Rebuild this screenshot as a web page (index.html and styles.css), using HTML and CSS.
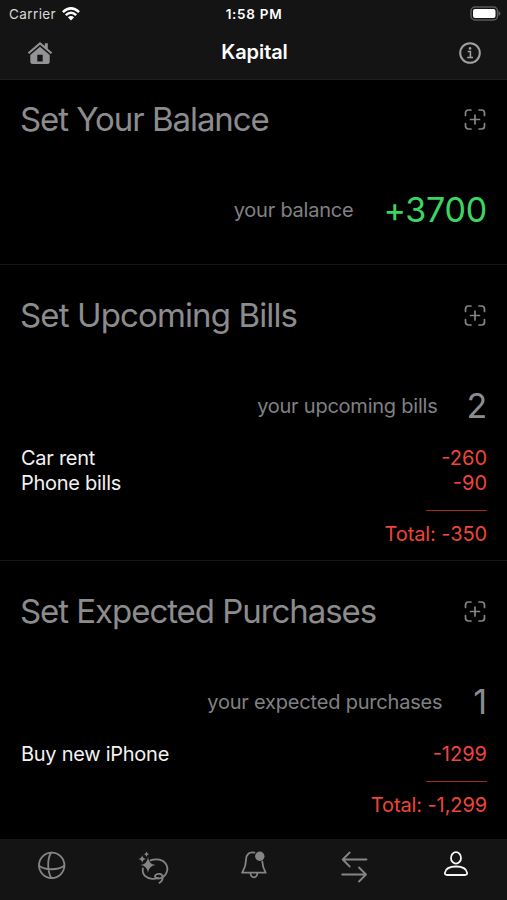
FILE: index.html
```html
<!DOCTYPE html>
<html lang="en">
<head>
<meta charset="utf-8">
<title>Kapital</title>
<link rel="stylesheet" href="styles.css">
</head>
<body>
<div class="app">
  <header class="header">
    <div class="status">
      <div class="carrier"><span>Carrier</span>
        <svg class="wifi" width="18" height="14" viewBox="0 0 18 14" fill="none" stroke="#fff" stroke-width="2.5"><path d="M.9 5.2Q9-2.4 17.100 5.200M3.800 8.200Q9 3.400 14.200 8.200"/><path d="M5.900 10.200Q9 7.700 12.100 10.200L9 13.400Z" fill="#fff" stroke="none"/></svg>
      </div>
      <span class="time">1:58 PM</span>
      <div class="battery-wrap"><svg width="31" height="16" viewBox="0 0 31 16"><rect x="1" y="1" width="26.500" height="13" rx="4" fill="#141414" stroke="#5a5a5a" stroke-width="1.500"/><rect x="3" y="3" width="22.500" height="9" rx="2" fill="#fff"/><path d="M28.500 5q2 .6 2 2.500t-2 2.500z" fill="#5a5a5a"/></svg></div>
    </div>
    <div class="navbar">
      <svg width="26" height="24" viewBox="0 0 26 24" fill="#939396"><path d="M.8 11.500 13 .9l4.800 4.200V2.200h3v5.500l4.400 3.800-1.400 1.500L13 3.700 2.200 13z"/><path fill-rule="evenodd" d="M13 5.700l9.700 8.300v6.500q0 2.500-2.500 2.500H5.800q-2.500 0-2.500-2.500V14zm-2.700 8v6.800h5.400v-6.800z"/></svg>
      <h1 class="title">Kapital</h1>
      <svg width="24" height="24" viewBox="0 0 24 24" fill="none" stroke="#a0a0a3" stroke-width="2"><circle cx="12" cy="12" r="9.800"/><path d="M9.700 10.500h2.700v6M9.200 16.500h5.800" stroke-width="1.600"/><circle cx="12" cy="7.400" r="1.300" fill="#a0a0a3" stroke="none"/></svg>
    </div>
  </header>
  <main>
    <section class="card balance">
      <div class="heading"><h2>Set Your Balance</h2><svg class="add" viewBox="0 0 22 22"><path d="M1.500 7.500V5q0-3 3-3H7M15 2h2.500q3 0 3 3v2.500M20.500 15.500V18q0 3-3 3H15M7 21H4.500q-3 0-3-3v-2.500M11 7v9M6.500 11.500h9"/></svg></div>
      <div class="summary"><span>your balance</span><strong class="plus">+3700</strong></div>
    </section>
    <section class="card bills">
      <div class="heading"><h2>Set Upcoming Bills</h2><svg class="add" viewBox="0 0 22 22"><path d="M1.500 7.500V5q0-3 3-3H7M15 2h2.500q3 0 3 3v2.500M20.500 15.500V18q0 3-3 3H15M7 21H4.500q-3 0-3-3v-2.500M11 7v9M6.500 11.500h9"/></svg></div>
      <div class="summary"><span>your upcoming bills</span><strong>2</strong></div>
      <ul class="list"><li><span>Car rent</span><b>-260</b></li><li><span>Phone bills</span><b>-90</b></li></ul>
      <div class="total">Total: -350</div>
    </section>
    <section class="card purchases">
      <div class="heading"><h2>Set Expected Purchases</h2><svg class="add" viewBox="0 0 22 22"><path d="M1.500 7.500V5q0-3 3-3H7M15 2h2.500q3 0 3 3v2.500M20.500 15.500V18q0 3-3 3H15M7 21H4.500q-3 0-3-3v-2.500M11 7v9M6.500 11.500h9"/></svg></div>
      <div class="summary"><span>your expected purchases</span><strong>1</strong></div>
      <ul class="list"><li><span>Buy new iPhone</span><b>-1299</b></li></ul>
      <div class="total">Total: -1,299</div>
    </section>
  </main>
  <nav class="tabs">
    <svg viewBox="0 0 36 36"><circle cx="17.700" cy="18.300" r="12.700"/><path d="M17.200 5.600c-4 6-4 18 0 25.400M5 18.800c6 4.600 19 4.600 25.400 0"/></svg>
    <svg viewBox="0 0 36 36"><path d="M15.500 13.300c6-2 12.500-.6 15.100 3.200 3.700 5.400 1 12.500-4.600 14.500-4 1.400-7.300-.7-5.500-2.900 2-2.300 7-1.300 7.200 1.900.1 2.400-1 4.500-3.200 5.700M7.800 21.500c-.7 6.500 3.400 10 9.400 10.400 2.200.1 4.200-.2 5.800-.9"/><path class="solid" d="M13 10q.8 7.200 7.500 8-6.700.8-7.500 8-.8-7.200-7.500-8 6.700-.8 7.500-8zM7.200 8q.4 3.600 3.800 4-3.400.4-3.800 4-.4-3.600-3.800-4 3.400-.4 3.800-4zM11.500 4.500q.4 2.400 2.500 2.700-2.100.3-2.500 2.700-.4-2.400-2.500-2.700 2.100-.3 2.500-2.700z"/></svg>
    <svg viewBox="0 0 36 36"><path d="M18.500 5.600c-5.200-1.300-8.500 2-8.500 7.400 0 6.500-1.500 8.500-3.900 12.700h23.600c-2.400-4-3.200-6-3.400-11.200M14.400 26c.5 5.700 6.500 5.700 7 0"/><circle class="solid" cx="23.800" cy="9.200" r="4.700"/></svg>
    <svg viewBox="0 0 36 36"><path d="M29.500 12.500H5.700M12.700 5.500l-7 7 7 7M5.200 27.500H29M22 20.500l7 7-7 7"/></svg>
    <svg class="active" viewBox="0 0 36 36"><ellipse cx="18" cy="10.900" rx="5" ry="5.700"/><path d="M9.100 28h17.800q2.500 0 2.200-2.200C28.400 21.500 23.500 19.500 18 19.500S7.600 21.500 6.900 25.800q-.3 2.200 2.200 2.200z"/></svg>
  </nav>
</div>
</body>
</html>
```

FILE: styles.css
```css
* { box-sizing: border-box; }
body { margin: 0; background: #000; font-family: Inter, "Liberation Sans", sans-serif; }
h1, h2, ul { margin: 0; padding: 0; }
.app { width: 507px; height: 900px; display: flex; flex-direction: column; overflow: hidden; }
main { flex: 1; }
.header { height: 80px; flex: none; background: #141414; border-bottom: 1px solid #1f1f1f; color: #fff; }
.status { height: 27px; padding: 0 6px 0 9px; display: grid; grid-template-columns: 1fr auto 1fr; align-items: center; font-size: 13.5px; }
.carrier { display: flex; align-items: center; gap: 6px; color: #d8d8d8; letter-spacing: .4px; }
.wifi { display: block; }
.time { font-weight: 600; font-size: 13.5px; letter-spacing: .7px; margin-right: 2px; }
.battery-wrap { display: flex; justify-content: flex-end; }
.navbar { height: 51px; padding: 0 25px 0 27px; display: flex; align-items: center; justify-content: space-between; }
.title { font-size: 20px; font-weight: 600; line-height: 24px; letter-spacing: -.1px; padding: 0 2px 1px 0; }
.card { padding: 0 20px 0 21px; border-bottom: 1px solid #141414; }
.balance { height: 185px; padding-top: 16px; }
.bills { height: 296px; padding-top: 27px; }
.purchases { height: 278px; padding-top: 27px; border: 0; }
.heading { height: 46px; display: flex; justify-content: space-between; align-items: center; }
h2 { margin-left: -1px; font-size: 33px; font-weight: 400; color: #8c8c8f; letter-spacing: -1.05px; white-space: nowrap; }
.bills h2 { letter-spacing: -.87px; }
.add { width: 22px; height: 22px; margin-right: 1px; fill: none; stroke: #858587; stroke-width: 1.7; stroke-linecap: round; }
.summary { height: 44px; margin-top: 45px; display: flex; justify-content: flex-end; align-items: center; gap: 30px; color: #818184; font-size: 20px; letter-spacing: -.23px; }
.summary span { padding-top: 2px; }
.summary strong { font-size: 34px; font-weight: 400; color: #8c8c8f; }
.bills .summary { gap: 29px; }
.purchases .summary { gap: 31px; letter-spacing: -.2px; }
.summary .plus { color: #3bd662; }
.list { list-style: none; margin-top: 19px; color: #f2f2f2; font-size: 20px; line-height: 25px; letter-spacing: -.27px; }
.list li { display: flex; justify-content: space-between; }
.list b { font-weight: 400; color: #ee453b; letter-spacing: 0; }
.total { position: relative; margin-top: 14px; padding-top: 12px; color: #ee453b; font-size: 20px; line-height: 25px; text-align: right; letter-spacing: -.1px; }
.total::before { content: ""; position: absolute; top: 0; right: 0; width: 61px; height: 1px; background: #a02923; }
.tabs { height: 61px; flex: none; padding: 8px 0 0 1px; background: #141414; display: grid; grid-template-columns: repeat(5, 1fr); justify-items: center; }
.tabs svg { width: 36px; height: 36px; overflow: visible; fill: none; stroke: #858587; stroke-width: 1.8; stroke-linecap: round; stroke-linejoin: round; }
.tabs .solid { fill: #858587; stroke: none; }
.tabs .active { stroke: #f4f4f4; }
```
